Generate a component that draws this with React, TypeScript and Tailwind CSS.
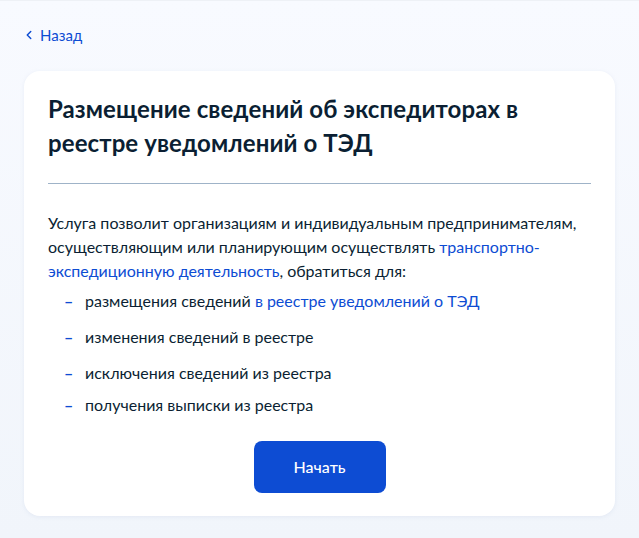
import { ChevronLeft } from "lucide-react";

const items = [
  { text: "размещения сведений ", link: "в реестре уведомлений о ТЭД" },
  { text: "изменения сведений в реестре" },
  { text: "исключения сведений из реестра" },
  { text: "получения выписки из реестра", tight: true },
];

export default function App() {
  return (
    <div
      className="min-h-[538px] bg-gradient-to-b from-[#f8faff] to-[#f1f5fb] text-[#0b1f33] border-t border-[#eef1f6]"
      style={{ fontFamily: "Lato, 'Noto Sans', sans-serif" }}
    >
      <div className="px-6 pt-[23px] pb-[25px]">
        <a href="#" className="flex items-center gap-[4px] -ml-[2px] text-[#0d4cd3] text-[15px] leading-[22px]">
          <ChevronLeft className="w-[14px] h-[14px]" strokeWidth={2.5} />
          Назад
        </a>
      </div>
      <div className="mx-6 bg-white rounded-2xl shadow-[0_1px_4px_rgba(150,170,200,0.15)] px-6 pt-[21px] pb-[23px]">
        <h1 className="text-[24px] leading-[34px] font-bold tracking-[0.1px]">
          Размещение сведений об экспедиторах в реестре уведомлений о ТЭД
        </h1>
        <div className="mt-[23px] mb-[27px] h-px bg-[#9fb3c8]" />
        <p className="text-[16px] leading-[24px]">
          Услуга позволит организациям и индивидуальным предпринимателям, осуществляющим или планирующим
          осуществлять{" "}
          <a href="#" className="text-[#0d4cd3]">
            транспортно-экспедиционную деятельность
          </a>
          , обратиться для:
        </p>
        <ul className="mt-[6px] flex flex-col">
          {items.map((it, i) => (
            <li
              key={i}
              className={
                "flex text-[16px] leading-[24px] " + (i === 0 ? "" : it.tight ? "mt-[8px]" : "mt-[12px]")
              }
            >
              <span className="w-[37px] pl-[16px] text-[#0d4cd3] font-bold">–</span>
              <span>
                {it.text}
                {it.link && <a href="#" className="text-[#0d4cd3]">{it.link}</a>}
              </span>
            </li>
          ))}
        </ul>
        <div className="flex justify-center mt-[24px]">
          <button className="w-[132px] h-[52px] rounded-lg bg-[#0d4cd3] text-white text-[16px] font-medium">
            Начать
          </button>
        </div>
      </div>
    </div>
  );
}
